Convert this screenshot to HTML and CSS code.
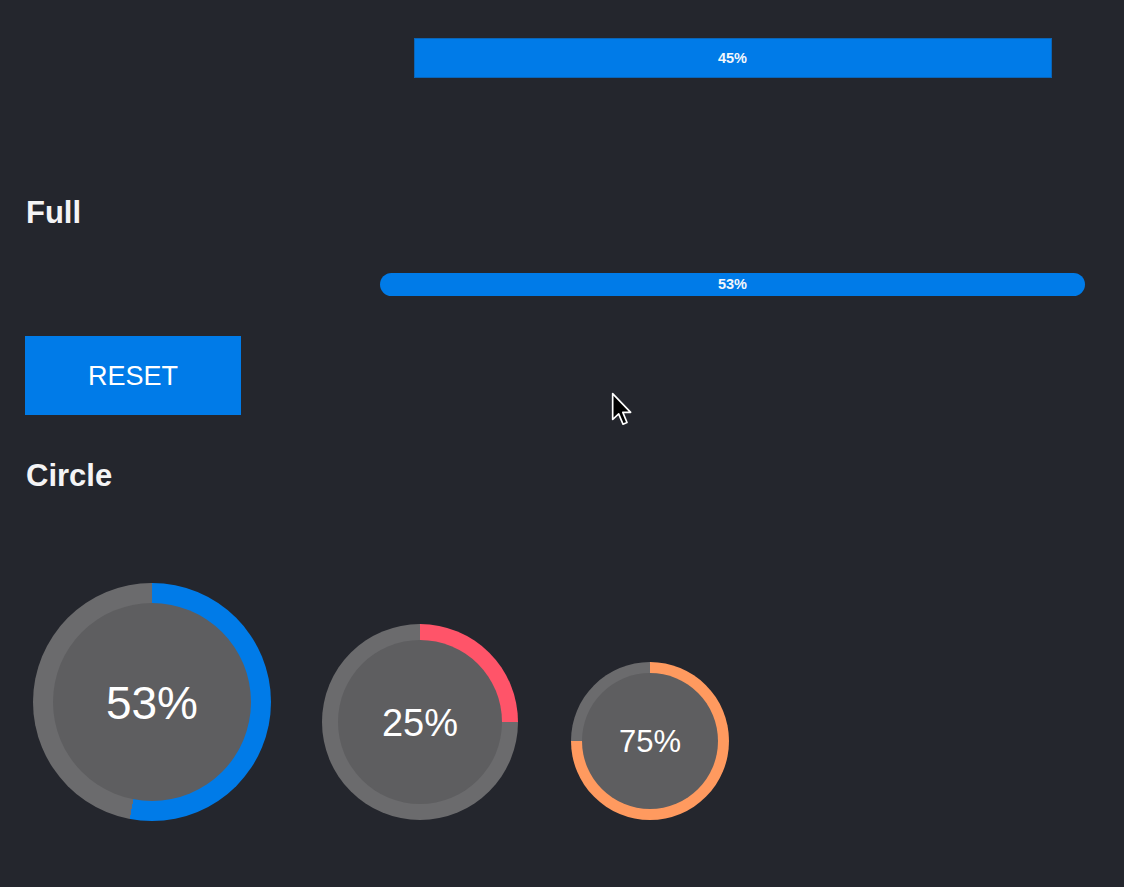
FILE: index.html
```html
<!DOCTYPE html>
<html lang="en">
<head>
<meta charset="utf-8">
<title>Progress</title>
<link rel="stylesheet" href="styles.css">
</head>
<body>
<main class="page">
  <div class="bar-row bar-row--top">
    <div class="bar bar--square"><span class="bar-label">45%</span></div>
  </div>

  <h2 class="heading heading--full">Full</h2>

  <div class="bar-row bar-row--full">
    <div class="bar bar--round"><span class="bar-label">53%</span></div>
  </div>

  <button class="reset-btn" type="button">RESET</button>

  <h2 class="heading heading--circle">Circle</h2>

  <div class="circles">
    <div class="ring ring--lg ring--blue" style="--p:53%"><div class="ring-inner">53%</div></div>
    <div class="ring ring--md ring--red" style="--p:25%"><div class="ring-inner">25%</div></div>
    <div class="ring ring--sm ring--orange" style="--p:75%"><div class="ring-inner">75%</div></div>
  </div>
</main>

<svg class="cursor" width="21" height="35" viewBox="0 0 12.6 21" aria-hidden="true">
  <path d="M1 1 L1 16.5 L4.6 13.1 L7.2 19.3 L9.6 18.3 L7.1 12.2 L11.8 12.2 Z" fill="#000" stroke="#fff" stroke-width="1" stroke-linejoin="round"/>
</svg>
</body>
</html>
```

FILE: styles.css
```css
html, body {
  margin: 0;
  padding: 0;
  background: #24262d;
}

body {
  width: 1124px;
  height: 887px;
  overflow: hidden;
  position: relative;
  font-family: "Liberation Sans", Arial, Helvetica, sans-serif;
  color: #ffffff;
}

.page {
  padding-left: 25px;
}

.bar-row {
  margin-left: 316px;
  display: flex;
  justify-content: center;
}

.bar-row--top {
  padding-top: 38px;
}

.bar-row--full {
  margin-top: 42px;
}

.bar {
  background: #007be8;
  display: flex;
  align-items: center;
  justify-content: center;
}

.bar--square {
  width: 638px;
  height: 40px;
  box-shadow: inset 0 0 0 1px #0a65b8;
}

.bar--round {
  width: 705px;
  height: 23px;
  border-radius: 12px;
}

.bar-label {
  font-size: 14.5px;
  font-weight: bold;
  color: #f2f6fb;
  line-height: 1;
}

.heading {
  margin: 0;
  font-size: 31px;
  font-weight: bold;
  line-height: 36px;
  color: #f4f4f5;
  padding-left: 1px;
}

.heading--full {
  margin-top: 117px;
}

.heading--circle {
  margin-top: 43px;
}

.reset-btn {
  display: block;
  margin-top: 40px;
  width: 216px;
  height: 79px;
  border: none;
  padding: 2px 0 0;
  background: #007be8;
  color: #ffffff;
  font-family: "Liberation Sans", Arial, Helvetica, sans-serif;
  font-size: 27px;
  font-weight: normal;
  cursor: pointer;
}

.circles {
  margin-top: 89px;
  margin-left: 8px;
  display: flex;
  align-items: flex-end;
  gap: 51px;
}

.ring {
  border-radius: 50%;
  display: flex;
  align-items: center;
  justify-content: center;
  background: conic-gradient(var(--c) 0 var(--p), #6b6b6d var(--p) 100%);
}

.ring-inner {
  border-radius: 50%;
  background: #5e5e60;
  display: flex;
  align-items: center;
  justify-content: center;
  color: #ffffff;
  padding-top: 2px;
  box-sizing: border-box;
}

.ring--blue { --c: #007be8; }
.ring--red { --c: #ff5469; }
.ring--orange { --c: #ff9a5f; }

.ring--lg { width: 238px; height: 238px; }
.ring--lg .ring-inner { width: 198px; height: 198px; font-size: 46px; }

.ring--md { width: 196px; height: 196px; margin-bottom: 1px; }
.ring--md .ring-inner { width: 164px; height: 164px; font-size: 38px; }

.ring--sm { width: 158px; height: 158px; margin-left: 2px; margin-bottom: 1px; }
.ring--sm .ring-inner { width: 136px; height: 136px; font-size: 31px; }

.cursor {
  position: absolute;
  left: 611px;
  top: 392px;
}
```
